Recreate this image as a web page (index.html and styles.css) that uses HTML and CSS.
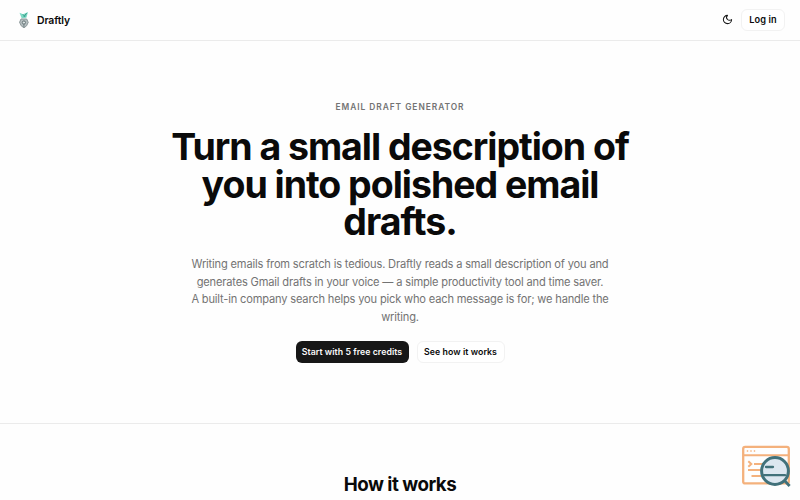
FILE: index.html
```html
<!DOCTYPE html>
<html lang="en">
<head>
  <meta charset="UTF-8" />
  <meta name="viewport" content="width=device-width, initial-scale=1" />
  <title>Draftly</title>
  <link rel="stylesheet" href="styles.css">
</head>
<body>
  <header class="navbar">
    <a class="brand" href="#">
      <svg class="brand-logo" viewBox="0 0 12 18">
        <path d="M1.5 1.8 L5 3.3 L10 1 L8.4 6.8 L3.7 7.2 Z" fill="#7edac5" />
        <path d="M4.8 3.3 L7 5.6 M8.6 2.2 L5.8 6" stroke="#319987" stroke-width="1" fill="none" />
        <path d="M3 8 L8.7 8 L10.2 11.3 L8.6 14.8 L6 16.8 L3.2 14.8 L1.6 11.3 Z" fill="#b5bec0" stroke="#8b9799" stroke-width="1" />
        <circle cx="5.9" cy="11.5" r="1.6" fill="#dce3e3" stroke="#657477" stroke-width="1" />
        <path d="M5.9 13 V16" stroke="#657477" stroke-width="0.8" />
      </svg>
      <span class="brand-name">Draftly</span>
    </a>
    <div class="nav-actions">
      <button class="theme-toggle" aria-label="Toggle theme">
        <svg viewBox="0 0 24 24" fill="none" stroke="currentColor" stroke-width="2.2" stroke-linecap="round" stroke-linejoin="round">
          <path d="M12 3a6 6 0 0 0 9 9 9 9 0 1 1-9-9Z" />
        </svg>
      </button>
      <a class="btn btn-outline btn-login" href="#">Log in</a>
    </div>
  </header>

  <main>
    <section class="hero">
      <p class="eyebrow">Email draft generator</p>
      <h1>Turn a small description of<br>you into polished email<br>drafts.</h1>
      <p class="lead">Writing emails from scratch is tedious. Draftly reads a small description of you and<br>generates Gmail drafts in your voice — a simple productivity tool and time saver.<br>A built-in company search helps you pick who each message is for; we handle the<br>writing.</p>
      <div class="hero-actions">
        <a class="btn btn-primary" href="#">Start with 5 free credits</a>
        <a class="btn btn-outline" href="#how">See how it works</a>
      </div>
    </section>

    <section class="how" id="how">
      <h2>How it works</h2>
    </section>
  </main>

  <!-- Floating search widget -->
  <a class="widget" href="#" aria-label="Search">
    <svg viewBox="0 0 50 44" fill="none">
      <rect x="2.2" y="2.8" width="45.6" height="36.6" rx="2" stroke="#f4b17c" stroke-width="2.3" />
      <path d="M2 11.2 H48" stroke="#f4b17c" stroke-width="2" />
      <path d="M5.8 7 H7.2 M9.3 7 H10.7 M12.8 7 H14.2" stroke="#f4b17c" stroke-width="1.5" />
      <path d="M7.3 17.3 L10.3 20 L7.3 22.7 M13 20 H22 M7 26 H20 M10.5 32 H20" stroke="#f4b17c" stroke-width="2" />
      <circle cx="34" cy="27" r="13.4" fill="#dce7f0" stroke="#41717a" stroke-width="3" />
      <path d="M25 23 H32 M23 31.2 H44" stroke="#41717a" stroke-width="2.3" stroke-linecap="round" />
      <path d="M43.5 36.5 L48.6 42" stroke="#41717a" stroke-width="2.8" />
    </svg>
  </a>
</body>
</html>
```
FILE: styles.css
```css
* { box-sizing: border-box; }
body {
  margin: 0;
  height: 100vh;
  overflow: hidden;
  font-family: Inter, "Liberation Sans", sans-serif;
  background: #fefefe;
  color: #0a0a0a;
}
a { color: inherit; text-decoration: none; }
h1, h2, p { margin: 0; }

.navbar {
  display: flex; justify-content: space-between; align-items: center;
  height: 41px; padding: 0 15px 1px 18px;
  border-bottom: 1px solid #ebebeb;
}
.brand { display: flex; align-items: center; gap: 7px; }
.brand-logo { width: 12px; height: 18px; display: block; }
.brand-name { font-size: 10.4px; font-weight: 600; letter-spacing: -0.1px; padding-top: 1px; }
.nav-actions { display: flex; align-items: center; gap: 8px; }
.theme-toggle {
  display: flex; padding: 0; border: none; background: none; color: #171717;
}
.theme-toggle svg { width: 11px; height: 11px; }

.btn {
  display: inline-flex; align-items: center; justify-content: center;
  height: 22px; border-radius: 6px;
  font-size: 8.75px; font-weight: 600; white-space: nowrap;
}
.btn-primary { width: 113px; background: #171717; color: #fafafa; letter-spacing: 0.05px; }
.btn-outline { width: 88px; border: 1px solid #f2f2f2; background: #fff; letter-spacing: 0.07px; }
.btn-login { width: 44px; font-size: 9.2px; }

.hero {
  display: flex; flex-direction: column; align-items: center;
  height: 383px; padding-top: 60px;
  text-align: center;
  border-bottom: 1px solid #ebebeb;
}
.eyebrow {
  font-size: 8.4px; line-height: 12px; font-weight: 600;
  letter-spacing: 0.95px; text-transform: uppercase; color: #737373;
}
h1 {
  margin-top: 15px;
  font-size: 37.5px; line-height: 37.5px; font-weight: 700;
  letter-spacing: -1.04px; white-space: nowrap;
}
.lead {
  margin-top: 15.5px;
  font-size: 11.1px; line-height: 17.6px;
  letter-spacing: -0.17px;
  color: #737373; white-space: nowrap;
}
.hero-actions { display: flex; gap: 8px; margin-top: 14.5px; }

.how { padding-top: 49px; text-align: center; }
h2 {
  font-size: 18.75px; line-height: 24px; font-weight: 700;
  letter-spacing: -0.5px;
}

.widget { position: fixed; right: 9px; bottom: 12px; width: 50px; height: 44px; }
.widget svg { display: block; width: 50px; height: 44px; }
```
